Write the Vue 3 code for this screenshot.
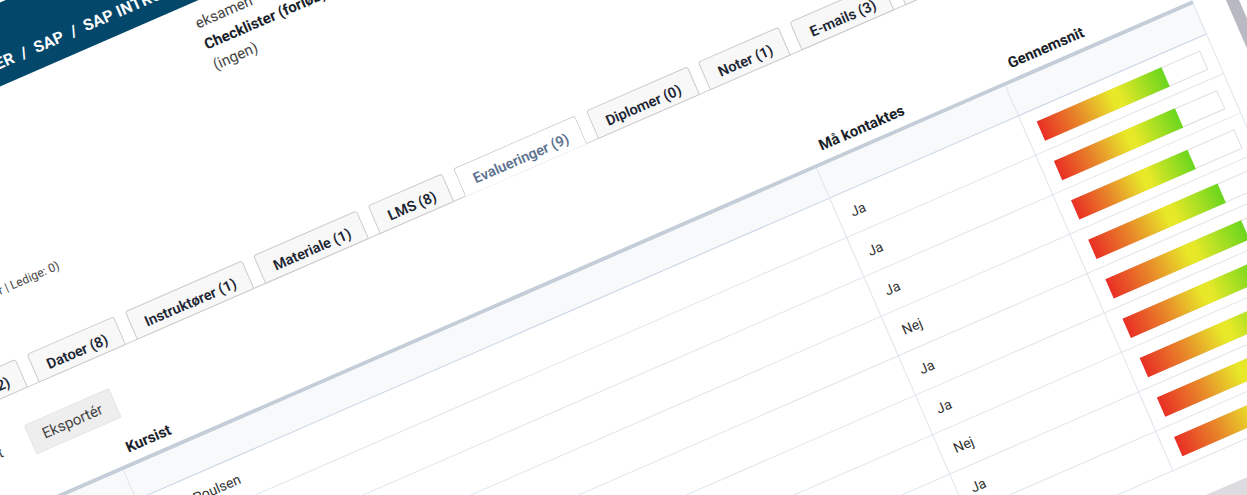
<script setup>
const tabs = [
  { label: 'Kursister (12)' },
  { label: 'Datoer (8)' },
  { label: 'Instruktører (1)' },
  { label: 'Materiale (1)' },
  { label: 'LMS (8)' },
  { label: 'Evalueringer (9)', active: true },
  { label: 'Diplomer (0)' },
  { label: 'Noter (1)' },
  { label: 'E-mails (3)' },
  { label: 'Log (2)' }
]

const rows = [
  { name: 'Jonas Poulsen', contact: 'Ja', score: 77 },
  { name: '', contact: 'Ja', score: 75 },
  { name: '', contact: 'Ja', score: 72 },
  { name: '', contact: 'Nej', score: 80 },
  { name: '', contact: 'Ja', score: 84 },
  { name: '', contact: 'Ja', score: 82 },
  { name: '', contact: 'Nej', score: 84 },
  { name: '', contact: 'Ja', score: 84 },
  { name: '', contact: 'Ja', score: 84 }
]
</script>

<template>
  <div class="viewport">
    <div class="stage">
      <div class="page">
        <header class="crumbs">
          <span>KURSER</span><i>/</i><span>SAP</span><i>/</i><span>SAP INTRODUKTION</span>
        </header>

        <section class="info">
          <p class="seats">(Max. 12 pladser | Ledige: 0)</p>
          <div class="details">
            <p>eksamen</p>
            <p class="strong">Checklister (forløb)</p>
            <p>(ingen)</p>
          </div>
        </section>

        <nav class="tabs">
          <a v-for="tab in tabs" :key="tab.label" class="tab" :class="{ active: tab.active }">{{ tab.label }}</a>
        </nav>

        <div class="toolbar">
          <a class="link">Vis alt</a>
          <button class="export">Eksportér</button>
        </div>

        <div class="table">
          <div class="line head">
            <div class="cell"></div>
            <div class="cell">Kursist</div>
            <div class="cell">Må kontaktes</div>
            <div class="cell">Gennemsnit</div>
          </div>
          <div class="line filter">
            <div class="cell"></div>
            <div class="cell"></div>
            <div class="cell"></div>
            <div class="cell"></div>
          </div>
          <div v-for="(row, i) in rows" :key="i" class="line row">
            <div class="cell"></div>
            <div class="cell">{{ row.name }}</div>
            <div class="cell contact">{{ row.contact }}</div>
            <div class="cell meter-cell">
              <div class="meter">
                <div class="bar" :style="{ width: row.score + '%' }"></div>
              </div>
            </div>
          </div>
        </div>

        <footer class="footer">Kontakt</footer>
      </div>
      <div class="scrollbar"></div>
    </div>
  </div>
</template>

<style>
html, body {
  margin: 0;
  background: #fff;
  overflow: hidden;
}
</style>

<style scoped>
.viewport {
  width: 1247px;
  height: 495px;
  overflow: hidden;
  background: #fff;
  font-family: Roboto, "Liberation Sans", sans-serif;
  font-size: 15px;
  color: #444;
}

.stage {
  width: 1440px;
  height: 1000px;
  display: flex;
  transform-origin: 0 0;
  transform: rotate(-23.53deg) translate(-300px, 2.3px);
}

.page {
  width: 1424px;
  display: flex;
  flex-direction: column;
}

.page > * {
  flex: none;
}

.scrollbar {
  width: 12px;
  background: #b9b9c3;
}

.crumbs {
  height: 77px;
  box-sizing: border-box;
  padding: 48px 0 0 228px;
  background: #03476b;
  color: #fff;
  font-size: 16px;
  line-height: 16px;
  font-weight: 700;
  letter-spacing: 0.3px;
  white-space: nowrap;
  display: flex;
}

.crumbs i {
  font-style: normal;
  margin: 0 8px;
}

.info {
  height: 256px;
  display: grid;
  grid-template-columns: 248px 1fr;
  column-gap: 222px;
}

.info p {
  margin: 0;
}

.seats {
  padding-top: 179px;
  font-size: 12px;
  line-height: 16px;
  text-align: right;
  white-space: nowrap;
}

.details {
  padding-top: 10px;
  line-height: 22.5px;
  white-space: nowrap;
}

.strong {
  font-weight: 700;
  color: #1a1f2b;
}

.tabs {
  height: 31px;
  box-sizing: border-box;
  padding-left: 52px;
  display: flex;
  gap: 11.6px;
  border-bottom: 1px solid #ccc;
}

.tab {
  height: 31px;
  box-sizing: border-box;
  padding: 7px 14px 0;
  font-size: 14.5px;
  line-height: 22px;
  font-weight: 600;
  white-space: nowrap;
  color: #1c2533;
  background: #f8f8f8;
  border: 1px solid #ccc;
  border-radius: 3px 3px 0 0;
}

.tab.active {
  color: #5d7290;
  background: #fff;
  border-bottom-color: #fff;
}

.toolbar {
  padding-top: 32.5px;
  height: 64.5px;
  box-sizing: border-box;
  display: flex;
  align-items: flex-start;
}

.link {
  width: 122px;
  line-height: 32px;
  color: #444;
  white-space: nowrap;
  text-align: right;
}

.export {
  margin-left: 29.5px;
  width: 93.5px;
  height: 32px;
  padding: 0;
  background: #eee;
  border: 1px solid #e6e6e6;
  border-radius: 2px;
  color: #444;
  font: 400 15px Roboto, "Liberation Sans", sans-serif;
}

.table {
  width: 1393px;
}

.line {
  display: grid;
  grid-template-columns: 226px 756px 206px 205px;
}

.cell {
  box-sizing: border-box;
  padding-left: 11px;
  white-space: nowrap;
}

.head {
  height: 49px;
  border-bottom: 4px solid #c4ced9;
  box-sizing: border-box;
}

.head .cell {
  padding-top: 22px;
  line-height: 16px;
  font-size: 15px;
  font-weight: 700;
  color: #1a1f2b;
}

.filter {
  height: 33px;
  box-sizing: border-box;
  background: #f7f9fb;
  border-bottom: 1px solid #c9d5e6;
}

.row {
  height: 43px;
  box-sizing: border-box;
  border-bottom: 1px solid #e1e6ec;
}

.row .cell {
  line-height: 43.5px;
  font-size: 14px;
  color: #333;
}

.row .contact {
  padding-left: 13.5px;
}

.filter .cell,
.row .cell {
  border-right: 1px solid #dfe5ec;
}

.row .meter-cell {
  padding: 12px 0 0 14px;
}

.meter {
  width: 178px;
  height: 21px;
  box-sizing: border-box;
  border: 1px solid #dedede;
}

.bar {
  height: 21px;
  margin: -1px 0 0 -1px;
  background: linear-gradient(90deg, #e92f25 0%, #e8892a 30%, #e8c42a 47%, #e8e828 58%, #e6e828 64%, #6ad61e 100%);
}

.footer {
  margin-top: 35.5px;
  height: 50px;
  box-sizing: border-box;
  padding: 3px 0 0 1252px;
  background: #dcdce0;
  color: #333;
  font-size: 12px;
  line-height: 16px;
}
</style>
